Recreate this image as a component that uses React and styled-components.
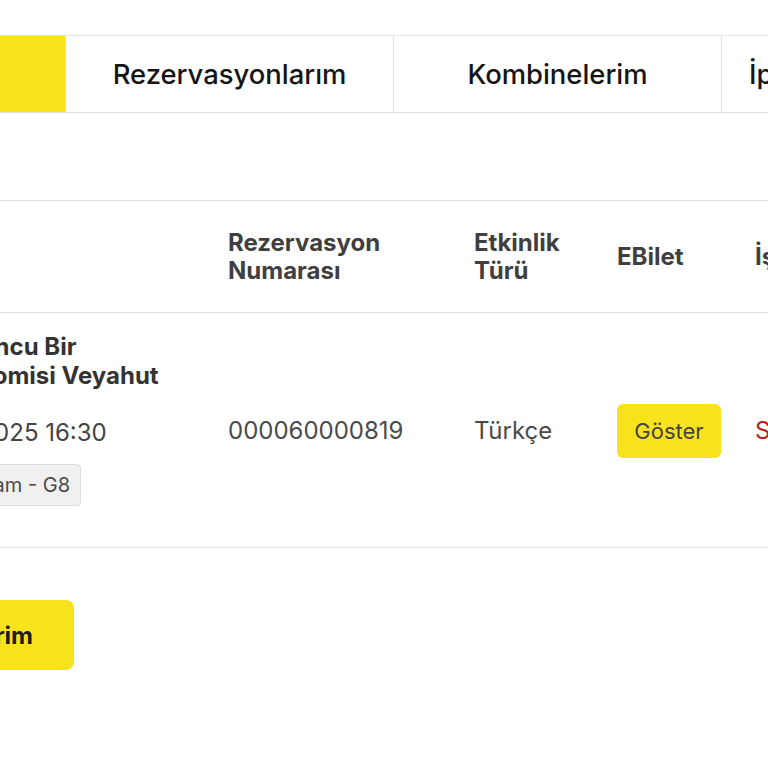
import React from 'react';
import styled, { createGlobalStyle } from 'styled-components';

const GlobalStyle = createGlobalStyle`
  html, body {
    margin: 0;
    padding: 0;
    background: #fff;
    overflow: hidden;
  }
  body {
    font-family: Inter, "Noto Sans", "Liberation Sans", sans-serif;
  }
  * {
    box-sizing: border-box;
  }
`;

const Viewport = styled.div`
  width: 768px;
  height: 768px;
  overflow: hidden;
`;

const Canvas = styled.div`
  width: 1500px;
  margin-left: -263px;
  padding-top: 35px;
`;

const TabBar = styled.div`
  display: flex;
  height: 78px;
  border-top: 1px solid #e0e0e0;
  border-bottom: 1px solid #e0e0e0;
`;

const Tab = styled.div`
  width: 328px;
  display: flex;
  align-items: center;
  justify-content: center;
  white-space: nowrap;
  font-size: 27.4px;
  font-weight: 500;
  color: #151515;
  background: ${(p) => (p.$active ? '#f8e21c' : '#fff')};
  border-left: ${(p) => (p.$first ? 'none' : '1px solid #e0e0e0')};
`;

const Table = styled.div`
  margin-top: 87px;
  border-top: 1px solid #e0e0e0;
`;

const Row = styled.div`
  display: grid;
  grid-template-columns: 475px 246px 143px 138px 300px;
  align-items: center;
  border-bottom: 1px solid #e0e0e0;
  min-height: ${(p) => (p.$head ? '112px' : 'auto')};
`;

const HeadCell = styled.div`
  padding: 0 16px 0 ${(p) => (p.$wide ? '168px' : '16px')};
  font-size: 24px;
  font-weight: 700;
  line-height: 28px;
  color: #3f3f3f;
`;

const Cell = styled.div`
  padding: 0 16px;
  font-size: 24px;
  color: ${(p) => (p.$danger ? '#b3241e' : '#4a4a4a')};
`;

const EventCell = styled.div`
  align-self: start;
  padding: 19px 16px 41px 168px;
  display: flex;
  flex-direction: column;
  align-items: flex-start;
  white-space: nowrap;
`;

const EventName = styled.div`
  font-size: 24px;
  font-weight: 700;
  line-height: 29px;
  color: #333;
`;

const EventDate = styled.div`
  margin-top: 28px;
  font-size: 24px;
  line-height: 30px;
  color: #444;
`;

const Seat = styled.div`
  margin-top: 16px;
  height: 42px;
  padding: 0 10px 0 7px;
  display: flex;
  align-items: center;
  font-size: 20px;
  color: #4a4a4a;
  background: #f0f0f0;
  border: 1px solid #dcdcdc;
  border-radius: 4px;
`;

const ShowButton = styled.button`
  width: 104px;
  height: 54px;
  margin-top: 1px;
  border: none;
  border-radius: 6px;
  background: #f8e21c;
  font-family: inherit;
  font-size: 22px;
  color: #444;
  cursor: pointer;
`;

const Footer = styled.div`
  padding-top: 52px;
`;

const MainButton = styled.button`
  height: 70px;
  width: 337px;
  border: none;
  border-radius: 8px;
  background: #f8e21c;
  font-family: inherit;
  font-size: 24px;
  font-weight: 700;
  color: #1d1d1d;
  text-align: right;
  padding-right: 41px;
`;

export default function App() {
  return (
    <Viewport>
      <GlobalStyle />
      <Canvas>
        <TabBar>
          <Tab $active $first>Biletlerim</Tab>
          <Tab>Rezervasyonlarım</Tab>
          <Tab>Kombinelerim</Tab>
          <Tab>İptal Edilen Biletlerim</Tab>
        </TabBar>

        <Table>
          <Row $head>
            <HeadCell $wide>Etkinlik</HeadCell>
            <HeadCell>Rezervasyon<br />Numarası</HeadCell>
            <HeadCell>Etkinlik<br />Türü</HeadCell>
            <HeadCell>EBilet</HeadCell>
            <HeadCell>İşlem</HeadCell>
          </Row>
          <Row>
            <EventCell>
              <EventName>Dokuzuncu Bir<br />Al Ekonomisi Veyahut</EventName>
              <EventDate>12 Nis 2025 16:30</EventDate>
              <Seat>Balkon Tam - G8</Seat>
            </EventCell>
            <Cell>000060000819</Cell>
            <Cell>Türkçe</Cell>
            <Cell><ShowButton>Göster</ShowButton></Cell>
            <Cell $danger>Sil</Cell>
          </Row>
        </Table>

        <Footer>
          <MainButton>Tüm Biletlerim</MainButton>
        </Footer>
      </Canvas>
    </Viewport>
  );
}
